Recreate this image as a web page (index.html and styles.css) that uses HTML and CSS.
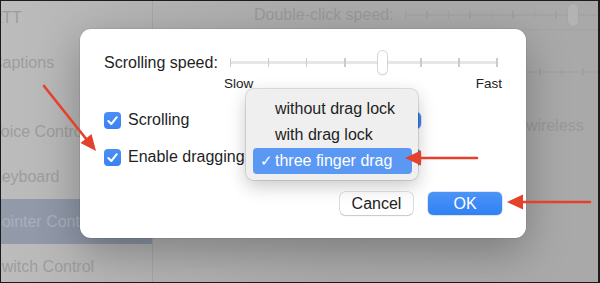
FILE: index.html
```html
<!DOCTYPE html>
<html>
<head>
<meta charset="utf-8">
<link rel="stylesheet" href="styles.css">
</head>
<body>
<div class="screen">
  <aside class="sidebar">
    <div class="side-item first">RTT</div>
    <div class="side-item">Captions</div>
    <div class="side-spacer"></div>
    <div class="side-item">Voice Control</div>
    <div class="side-item">Keyboard</div>
    <div class="side-item selected">Pointer Control</div>
    <div class="side-item">Switch Control</div>
  </aside>
  <main class="content">
    <div class="header-row">
      <span class="bg-label">Double-click speed:</span>
      <div class="bg-slider">
        <div class="bg-ticks">
          <i></i><i></i><i></i><i></i><i></i><i></i><i></i><i></i><i></i><i></i>
        </div>
        <div class="bg-knob"></div>
      </div>
    </div>
    <div class="track-row">
      <div class="bg-ticks">
        <i></i><i></i><i></i><i></i><i></i><i></i><i></i><i></i><i></i><i></i>
      </div>
    </div>
    <div class="wireless-row">wireless</div>
  </main>

  <div class="dialog">
    <div class="speed-row">
      <span class="label">Scrolling speed:</span>
      <div class="slider">
        <div class="track"></div>
        <div class="ticks">
          <i></i><i></i><i></i><i></i><i></i><i></i><i></i><i></i>
        </div>
        <div class="knob"></div>
      </div>
    </div>
    <div class="scale"><span>Slow</span><span>Fast</span></div>

    <div class="check-row">
      <span class="checkbox"><svg viewBox="0 0 17 17" width="17" height="17"><path d="M4.3 9 L7.3 12 L12.8 5.2" fill="none" stroke="#fff" stroke-width="2" stroke-linecap="round" stroke-linejoin="round"/></svg></span>
      <span class="label">Scrolling</span>
      <span class="popup-btn"></span>
    </div>
    <div class="check-row second">
      <span class="checkbox"><svg viewBox="0 0 17 17" width="17" height="17"><path d="M4.3 9 L7.3 12 L12.8 5.2" fill="none" stroke="#fff" stroke-width="2" stroke-linecap="round" stroke-linejoin="round"/></svg></span>
      <span class="label">Enable dragging</span>
      <span class="popup-btn"></span>
    </div>

    <div class="actions">
      <button class="btn cancel">Cancel</button>
      <button class="btn ok">OK</button>
    </div>

    <div class="menu">
      <div class="menu-item"><span class="mark"></span>without drag lock</div>
      <div class="menu-item"><span class="mark"></span>with drag lock</div>
      <div class="menu-item active"><span class="mark">✓</span>three finger drag</div>
    </div>
  </div>

  <svg class="arrows" viewBox="0 0 600 283" width="600" height="283">
    <g stroke="#e4412c" stroke-width="2.6" fill="#e4412c" stroke-linecap="round">
      <line x1="44" y1="86" x2="87" y2="140"/>
      <polygon stroke="none" points="96,151 80.5,142.9 91.5,134.1"/>
      <line x1="477" y1="158" x2="419" y2="158"/>
      <polygon stroke="none" points="405,158 421,150.5 421,165.5"/>
      <line x1="590" y1="202" x2="521" y2="202"/>
      <polygon stroke="none" points="507,202 523,194.5 523,209.5"/>
    </g>
  </svg>
</div>
</body>
</html>
```

FILE: styles.css
```css
html, body {
  margin: 0;
  padding: 0;
}

body {
  font-family: "Liberation Sans", Arial, sans-serif;
  width: 600px;
  height: 283px;
  overflow: hidden;
}

.screen {
  position: relative;
  width: 600px;
  height: 283px;
  display: grid;
  grid-template-columns: 153px 1fr;
  overflow: hidden;
  background: linear-gradient(90deg, #b9b9b9 0%, #ababab 55%, #a9a9a9 100%);
}

.screen::after {
  content: "";
  position: absolute;
  inset: 0;
  border: 1px solid #1c1c1c;
  border-right-width: 2px;
  pointer-events: none;
}

/* sidebar */
.sidebar {
  display: flex;
  flex-direction: column;
  overflow: hidden;
  border-right: 1px solid #a6a6a6;
  background: linear-gradient(90deg, #bcbcbc, #b3b3b3);
}

.side-item {
  flex: none;
  height: 45px;
  line-height: 45px;
  font-size: 16px;
  color: #9d9d9d;
  white-space: nowrap;
  text-indent: -9px;
}

.side-item.first {
  margin-top: -5px;
}

.side-spacer {
  flex: none;
  height: 24px;
}

.side-item.selected {
  background: linear-gradient(90deg, #939bab, #8a93a4);
  color: #a9afbb;
}

/* right backdrop content */
.content {
  display: flex;
  flex-direction: column;
  overflow: hidden;
}

.header-row {
  display: flex;
  align-items: center;
  height: 30px;
  padding-left: 101px;
  gap: 11px;
  border-bottom: 1px solid rgba(0, 0, 0, 0.03);
  box-sizing: border-box;
}

.bg-label {
  font-size: 16px;
  color: #999;
  white-space: nowrap;
}

.bg-slider {
  position: relative;
  flex: none;
  width: 200px;
  height: 22px;
  display: flex;
  align-items: center;
}

.bg-ticks {
  display: flex;
  gap: 20px;
  align-items: center;
  height: 10px;
  background: linear-gradient(#0000 40%, #a4a4a4 40%, #a4a4a4 60%, #0000 60%);
}

.bg-ticks i {
  display: block;
  width: 1.5px;
  height: 8px;
  background: #a0a0a0;
}

.bg-knob {
  position: absolute;
  left: 163px;
  top: 0;
  width: 10px;
  height: 22px;
  border-radius: 5px;
  background: #b3b3b3;
  box-shadow: 0 0 0 0.5px #a2a2a2;
}

.track-row {
  margin-top: 32px;
  height: 20px;
  display: flex;
  align-items: center;
  padding-left: 257px;
}

.wireless-row {
  margin-top: 34px;
  height: 20px;
  line-height: 20px;
  font-size: 16px;
  color: #999;
  padding-left: 373px;
  white-space: nowrap;
}

/* dialog */
.dialog {
  position: absolute;
  left: 80px;
  top: 29px;
  width: 446px;
  height: 209px;
  box-sizing: border-box;
  padding: 21px 24px 23px;
  background: #fff;
  border-radius: 11px;
  box-shadow: 0 0 0 0.5px rgba(0, 0, 0, 0.12), 0 14px 44px rgba(0, 0, 0, 0.28);
  color: #1f1f1f;
  display: flex;
  flex-direction: column;
}

.label {
  font-size: 16px;
  white-space: nowrap;
}

.speed-row {
  display: flex;
  align-items: center;
  height: 25px;
  gap: 12px;
}

.slider {
  position: relative;
  flex: none;
  width: 268px;
  height: 25px;
}

.track {
  position: absolute;
  left: 0;
  right: 0;
  top: 11px;
  height: 3px;
  border-radius: 2px;
  background: #e6e6e6;
}

.ticks {
  position: relative;
  display: flex;
  justify-content: space-between;
  align-items: center;
  height: 25px;
}

.ticks i {
  display: block;
  width: 1.5px;
  height: 9px;
  background: #cbcbcb;
}

.knob {
  position: absolute;
  left: 147px;
  top: 0;
  width: 11px;
  height: 25px;
  box-sizing: border-box;
  border-radius: 6px;
  background: #fff;
  border: 1px solid #d4d4d4;
  box-shadow: 0 1px 1px rgba(0, 0, 0, 0.06);
}

.scale {
  display: flex;
  justify-content: space-between;
  width: 278px;
  margin-left: 120px;
  margin-top: 1px;
  height: 16px;
  line-height: 16px;
  font-size: 13.5px;
  color: #222;
}

.check-row {
  display: flex;
  align-items: center;
  width: 317px;
  height: 24px;
  margin-top: 16px;
}

.check-row.second {
  margin-top: 13px;
}

.checkbox {
  flex: none;
  width: 17px;
  height: 17px;
  border-radius: 4px;
  background: linear-gradient(#4a8ff6, #3a82f3);
  margin-right: 7px;
  display: flex;
}

.popup-btn {
  margin-left: auto;
  width: 150px;
  height: 17px;
  border-radius: 5px;
  background: linear-gradient(90deg, #fff 0, #fff 132px, #3b83f4 132px);
  box-shadow: 0 0 0 0.5px rgba(0, 0, 0, 0.2);
}

.actions {
  display: flex;
  justify-content: flex-end;
  gap: 15px;
  margin-top: 23px;
}

.btn {
  font-family: "Liberation Sans", Arial, sans-serif;
  font-size: 16px;
  height: 23px;
  border: none;
  border-radius: 5px;
  padding: 0;
  margin: 0;
}

.btn.cancel {
  width: 73px;
  background: #fff;
  color: #222;
  box-shadow: 0 0 0 0.5px rgba(0, 0, 0, 0.22), 0 1px 1.5px rgba(0, 0, 0, 0.12);
}

.btn.ok {
  width: 74px;
  background: linear-gradient(#4b94f8, #3181f3);
  color: #fff;
  box-shadow: 0 0 0 0.5px rgba(0, 60, 160, 0.25);
}

/* popup menu */
.menu {
  position: absolute;
  left: 166px;
  top: 60px;
  width: 172px;
  height: 91px;
  box-sizing: border-box;
  padding: 7px 6px 6px 7px;
  background: #efefef;
  border-radius: 7px;
  box-shadow: 0 0 0 0.5px rgba(0, 0, 0, 0.22), 0 6px 18px rgba(0, 0, 0, 0.22);
}

.menu-item {
  display: flex;
  align-items: center;
  height: 26px;
  font-size: 16px;
  color: #1e1e1e;
  border-radius: 4px;
  white-space: nowrap;
}

.mark {
  flex: none;
  width: 15px;
  padding-left: 7px;
  font-size: 15px;
}

.menu-item.active {
  background: #5a98f3;
  color: #fff;
}

.arrows {
  position: absolute;
  left: 0;
  top: 0;
  pointer-events: none;
}
```
